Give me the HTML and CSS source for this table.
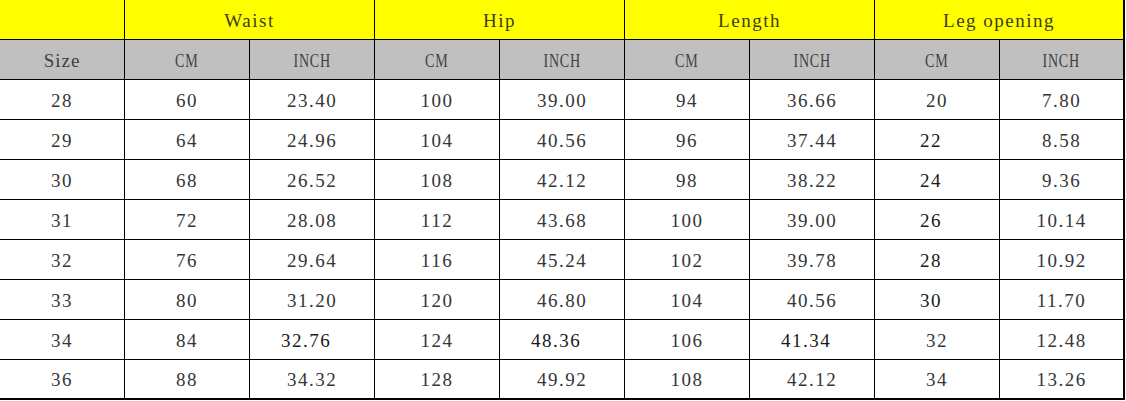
FILE: index.html
```html
<!DOCTYPE html>
<html>
<head>
<meta charset="utf-8">
<link rel="stylesheet" href="styles.css">
</head>
<body>
<table class="size-table">
  <colgroup>
    <col class="c"><col class="c"><col class="c"><col class="c"><col class="c"><col class="c"><col class="c"><col class="c"><col class="c">
  </colgroup>
  <tr class="group-row">
    <td class="corner"></td>
    <td colspan="2">Waist</td>
    <td colspan="2">Hip</td>
    <td colspan="2">Length</td>
    <td colspan="2" class="last">Leg opening</td>
  </tr>
  <tr class="unit-row">
    <td>Size</td>
    <td><span class="unit">CM</span></td><td><span class="unit">INCH</span></td>
    <td><span class="unit">CM</span></td><td><span class="unit">INCH</span></td>
    <td><span class="unit">CM</span></td><td><span class="unit">INCH</span></td>
    <td><span class="unit">CM</span></td><td class="last"><span class="unit">INCH</span></td>
  </tr>
  <tr><td>28</td><td>60</td><td>23.40</td><td>100</td><td>39.00</td><td>94</td><td>36.66</td><td>20</td><td class="last">7.80</td></tr>
  <tr><td>29</td><td>64</td><td>24.96</td><td>104</td><td>40.56</td><td>96</td><td>37.44</td><td class="shift">22</td><td class="last">8.58</td></tr>
  <tr><td>30</td><td>68</td><td>26.52</td><td>108</td><td>42.12</td><td>98</td><td>38.22</td><td class="shift">24</td><td class="last">9.36</td></tr>
  <tr><td>31</td><td>72</td><td>28.08</td><td>112</td><td>43.68</td><td>100</td><td>39.00</td><td class="shift">26</td><td class="last">10.14</td></tr>
  <tr><td>32</td><td>76</td><td>29.64</td><td>116</td><td>45.24</td><td>102</td><td>39.78</td><td class="shift">28</td><td class="last">10.92</td></tr>
  <tr><td>33</td><td>80</td><td>31.20</td><td>120</td><td>46.80</td><td>104</td><td>40.56</td><td class="shift">30</td><td class="last">11.70</td></tr>
  <tr><td>34</td><td>84</td><td class="shift">32.76</td><td>124</td><td class="shift">48.36</td><td>106</td><td class="shift">41.34</td><td>32</td><td class="last">12.48</td></tr>
  <tr class="final"><td>36</td><td>88</td><td>34.32</td><td>128</td><td>49.92</td><td>108</td><td>42.12</td><td>34</td><td class="last">13.26</td></tr>
</table>
</body>
</html>
```

FILE: styles.css
```css
html, body {
  margin: 0;
  padding: 0;
  background: #ffffff;
}

.size-table {
  border-collapse: separate;
  border-spacing: 0;
  table-layout: fixed;
  width: 1125px;
  font-family: "Liberation Serif", "Times New Roman", serif;
  font-size: 19px;
  color: #363636;
  letter-spacing: 1.5px;
}

.size-table col.c {
  width: 125px;
}

.size-table td {
  height: 39px;
  padding: 2px 0 0 0;
  text-align: center;
  vertical-align: middle;
  border-right: 1px solid #000;
  border-bottom: 1px solid #000;
  box-sizing: border-box;
  white-space: nowrap;
}

.size-table tr {
  height: 40px;
}

.size-table td.last {
  border-right: 2px solid #000;
}

.group-row td {
  background: #ffff00;
  color: #3d3d1a;
  letter-spacing: 1.5px;
}

.unit-row td {
  background: #c0c0c0;
  color: #404040;
  letter-spacing: 1px;
}

.unit {
  display: inline-block;
  transform: scaleX(0.74);
}

.final td {
  border-bottom: 2px solid #000;
}

.size-table td.shift {
  color: #1a1a1a;
  padding-right: 12px;
}
```
